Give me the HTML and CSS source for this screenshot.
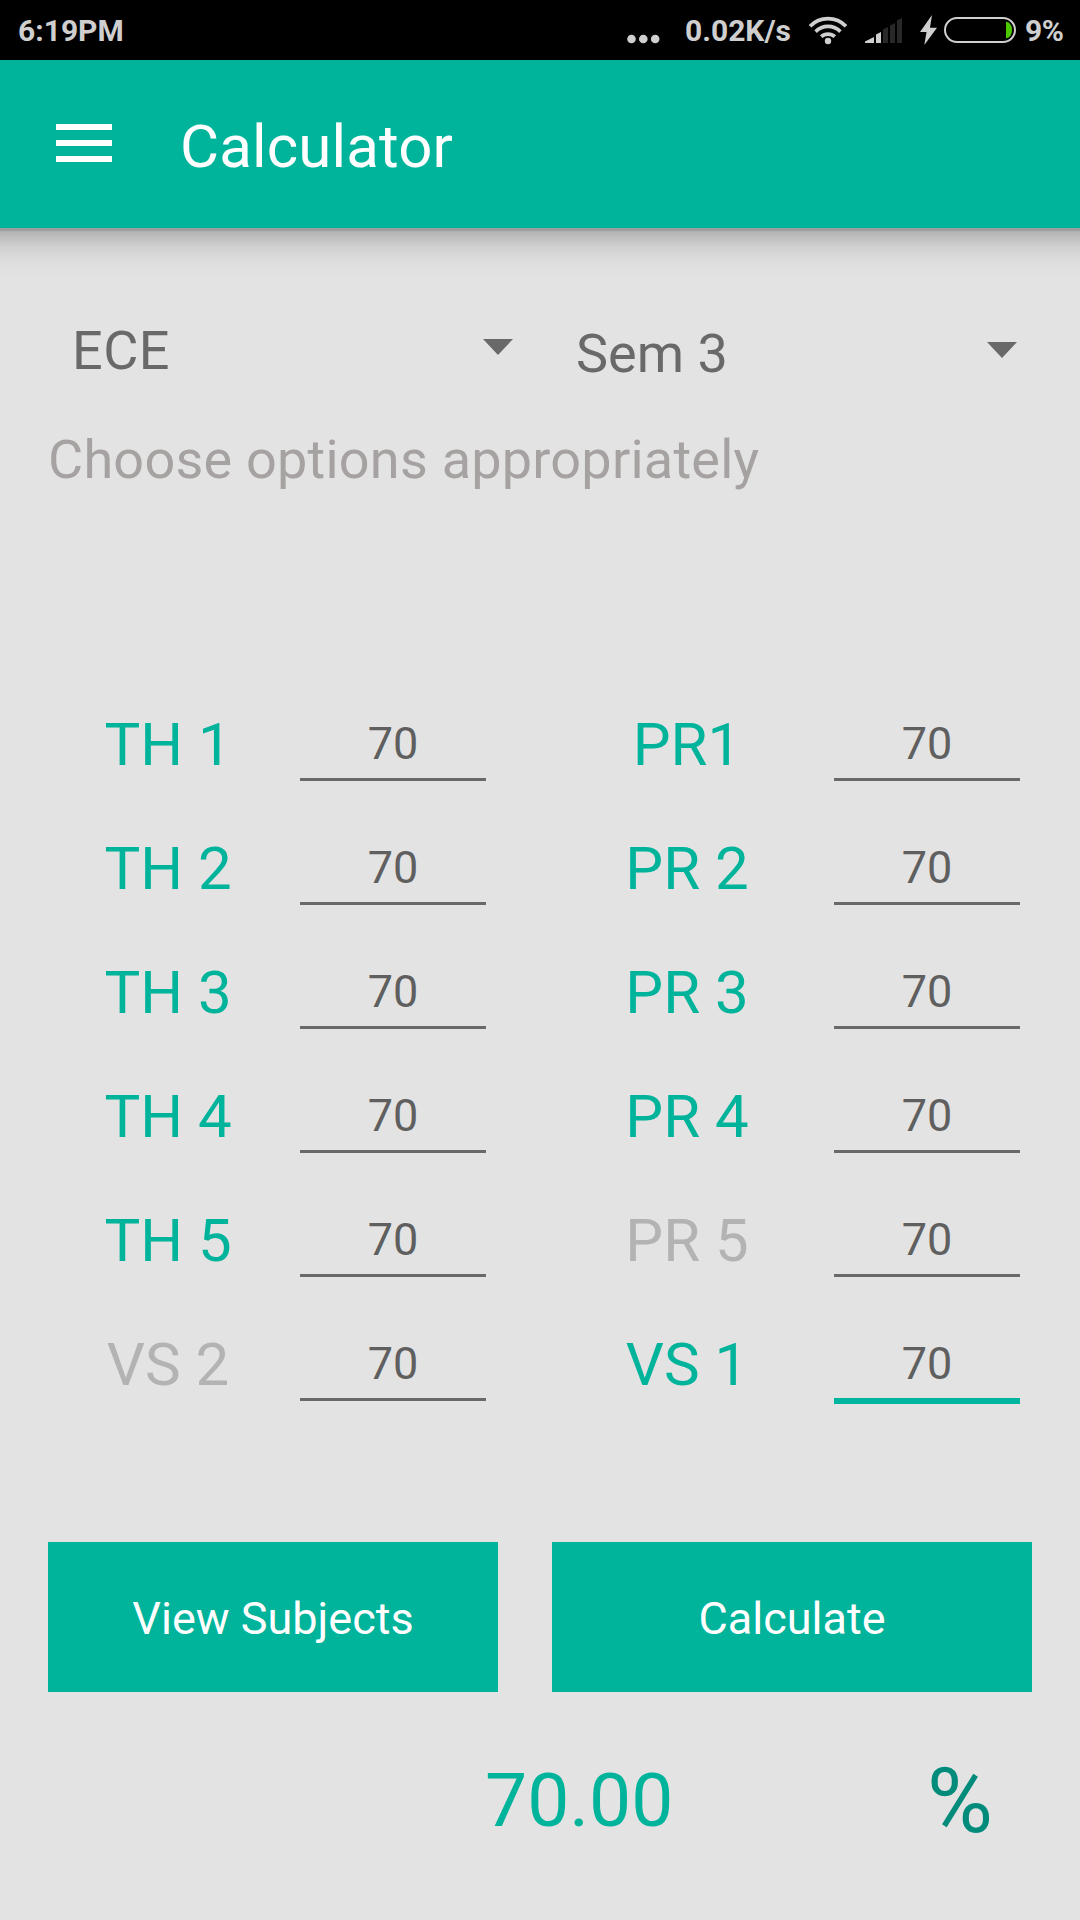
FILE: index.html
```html
<!DOCTYPE html>
<html lang="en">
<head>
<meta charset="utf-8">
<title>Calculator</title>
<link rel="stylesheet" href="styles.css">
</head>
<body>
<div class="status">
  <span class="clock">6:19PM</span>
  <svg class="dots" width="33" height="10" viewBox="0 0 33 10"><circle cx="4.5" cy="5" r="4.3"/><circle cx="16.3" cy="5" r="4.3"/><circle cx="28.2" cy="5" r="4.3"/></svg>
  <span class="speed">0.02K/s</span>
  <svg class="wifi" width="40" height="30" viewBox="0 0 40 30"><g fill="none" stroke="#cfcfcf" stroke-width="3.7"><path d="M2 11.2A25 25 0 0 1 38 11.2"/><path d="M7.6 16.6A17.5 17.5 0 0 1 32.4 16.6"/><path d="M13.2 21.7A10 10 0 0 1 26.8 21.7"/></g><circle cx="20" cy="26" r="3.2"/></svg>
  <svg class="signal" width="38" height="26" viewBox="0 0 38 26"><path d="M0 26V24.5L9 20V26Z"/><path d="M11 26V17.5L16 15V26Z"/><g fill="#282828"><path d="M18 26V12.5L23 10V26Z"/><path d="M25 26V8.5L30 6V26Z"/><path d="M32 26V3.5L37 1V26Z"/></g></svg>
  <svg class="bolt" width="17" height="30" viewBox="0 0 17 30"><path d="M12 0L0 17H6.5L4.3 30L17 12.7H10Z"/></svg>
  <svg class="battery" width="72" height="26" viewBox="0 0 72 26"><rect x="1" y="1" width="70" height="24" rx="12" fill="none" stroke="#cfcfcf" stroke-width="2"/><path fill="#4cc800" d="M62 4.5Q68 6 68 13T62 21.5Z"/></svg>
  <span class="level">9%</span>
</div>
<header class="appbar">
  <svg class="menu" width="56" height="38" viewBox="0 0 56 38"><path d="M0 0H56V6H0ZM0 16H56V22H0ZM0 32H56V38H0Z"/></svg>
  <h1 class="title">Calculator</h1>
</header>
<main class="content">
  <div class="selectors">
    <div class="spinner spinner-branch"><span>ECE</span><svg class="caret" width="30" height="16" viewBox="0 0 30 16"><path d="M0 0H30L15 16Z"/></svg></div>
    <div class="spinner spinner-sem"><span>Sem 3</span><svg class="caret" width="30" height="16" viewBox="0 0 30 16"><path d="M0 0H30L15 16Z"/></svg></div>
  </div>
  <p class="hint">Choose options appropriately</p>
  <form class="marks">
    <label class="name">TH 1</label><input class="mark" value="70"><label class="name">PR1</label><input class="mark" value="70">
    <label class="name">TH 2</label><input class="mark" value="70"><label class="name">PR 2</label><input class="mark" value="70">
    <label class="name">TH 3</label><input class="mark" value="70"><label class="name">PR 3</label><input class="mark" value="70">
    <label class="name">TH 4</label><input class="mark" value="70"><label class="name">PR 4</label><input class="mark" value="70">
    <label class="name">TH 5</label><input class="mark" value="70"><label class="name off">PR 5</label><input class="mark" value="70">
    <label class="name off">VS 2</label><input class="mark" value="70"><label class="name">VS 1</label><input class="mark active" value="70">
  </form>
  <div class="actions">
    <button class="btn">View Subjects</button>
    <button class="btn">Calculate</button>
  </div>
  <div class="result"><span class="total">70.00</span><span class="percent">%</span></div>
</main>
</body>
</html>
```
FILE: styles.css
```css
* { box-sizing: border-box; }
body {
  margin: 0;
  width: 1080px;
  height: 1920px;
  overflow: hidden;
  background: #e3e3e3;
  font-family: Roboto, sans-serif;
}
.status {
  display: flex;
  height: 60px;
  padding: 1px 0 0 18px;
  background: #000;
  color: #cfcfcf;
  fill: #cfcfcf;
  font-size: 30px;
  font-weight: 700;
  line-height: 60px;
}
.status span { white-space: nowrap; }
.clock { width: 609px; }
.dots { margin-top: 33px; }
.speed { width: 123px; margin-left: 25px; }
.wifi { margin-top: 14px; }
.signal { margin: 16px 0 0 17px; }
.bolt { margin: 14px 0 0 17px; }
.battery { margin: 16px 0 0 7px; }
.level { margin-left: 9px; letter-spacing: -0.5px; }
.appbar {
  display: flex;
  align-items: center;
  height: 168px;
  padding: 0 56px;
  gap: 68px;
  background: #00b39b;
  color: #fff;
}
.menu { fill: #fff; margin-top: -2px; }
.title { margin: 5px 0 0; font-size: 60px; font-weight: 400; letter-spacing: 0.15px; }
.content {
  height: 1692px;
  padding: 93px 48px 0;
  background: linear-gradient(#9d9d9d 0 3px, #b1b1b1 3px, #bebebe 9px, #d2d2d2 20px, #dedede 34px, #e3e3e3 50px);
}
.selectors {
  display: grid;
  grid-template-columns: 504px 480px;
  height: 107px;
  color: #696969;
  fill: #696969;
  font-size: 54px;
  line-height: 60px;
}
.spinner { display: flex; justify-content: space-between; }
.spinner-branch { padding: 0 39px 0 24px; letter-spacing: 0.5px; }
.spinner-sem { padding: 3px 15px 0 24px; }
.caret { margin-top: 18px; }
.hint { margin: 0; height: 256px; color: #a6a2a1; font-size: 54px; line-height: 64px; letter-spacing: 0.23px; }
.marks { display: grid; grid-template-columns: 252px 186px 348px 186px; grid-auto-rows: 124px; }
.name { color: #00b39b; font-size: 60px; line-height: 122px; text-align: center; padding-right: 12px; }
.name:nth-child(4n + 3) { padding: 0 42px 0 96px; }
.name.off { color: #b3b3b3; }
.mark {
  width: 186px;
  height: 69px;
  margin: 28px 0 0;
  padding: 0 0 3px;
  border: 0;
  border-bottom: 3px solid #696969;
  border-radius: 0;
  background: none;
  color: #5f5f5f;
  font: 45px Roboto, sans-serif;
  text-align: center;
}
.mark.active { height: 72px; border-bottom: 6px solid #00b5a0; }
.actions { display: grid; grid-template-columns: 450px 480px; gap: 54px; margin-top: 114px; height: 150px; }
.btn { border: 0; padding: 2px 0 0; background: #00b39b; color: #fff; font: 45px Roboto, sans-serif; }
.result { display: flex; justify-content: space-between; padding: 58px 39px 0 437px; line-height: 100px; }
.total { color: #00b39b; font-size: 75px; }
.percent { padding-top: 2px; color: #008b7a; font-size: 90px; }
```
